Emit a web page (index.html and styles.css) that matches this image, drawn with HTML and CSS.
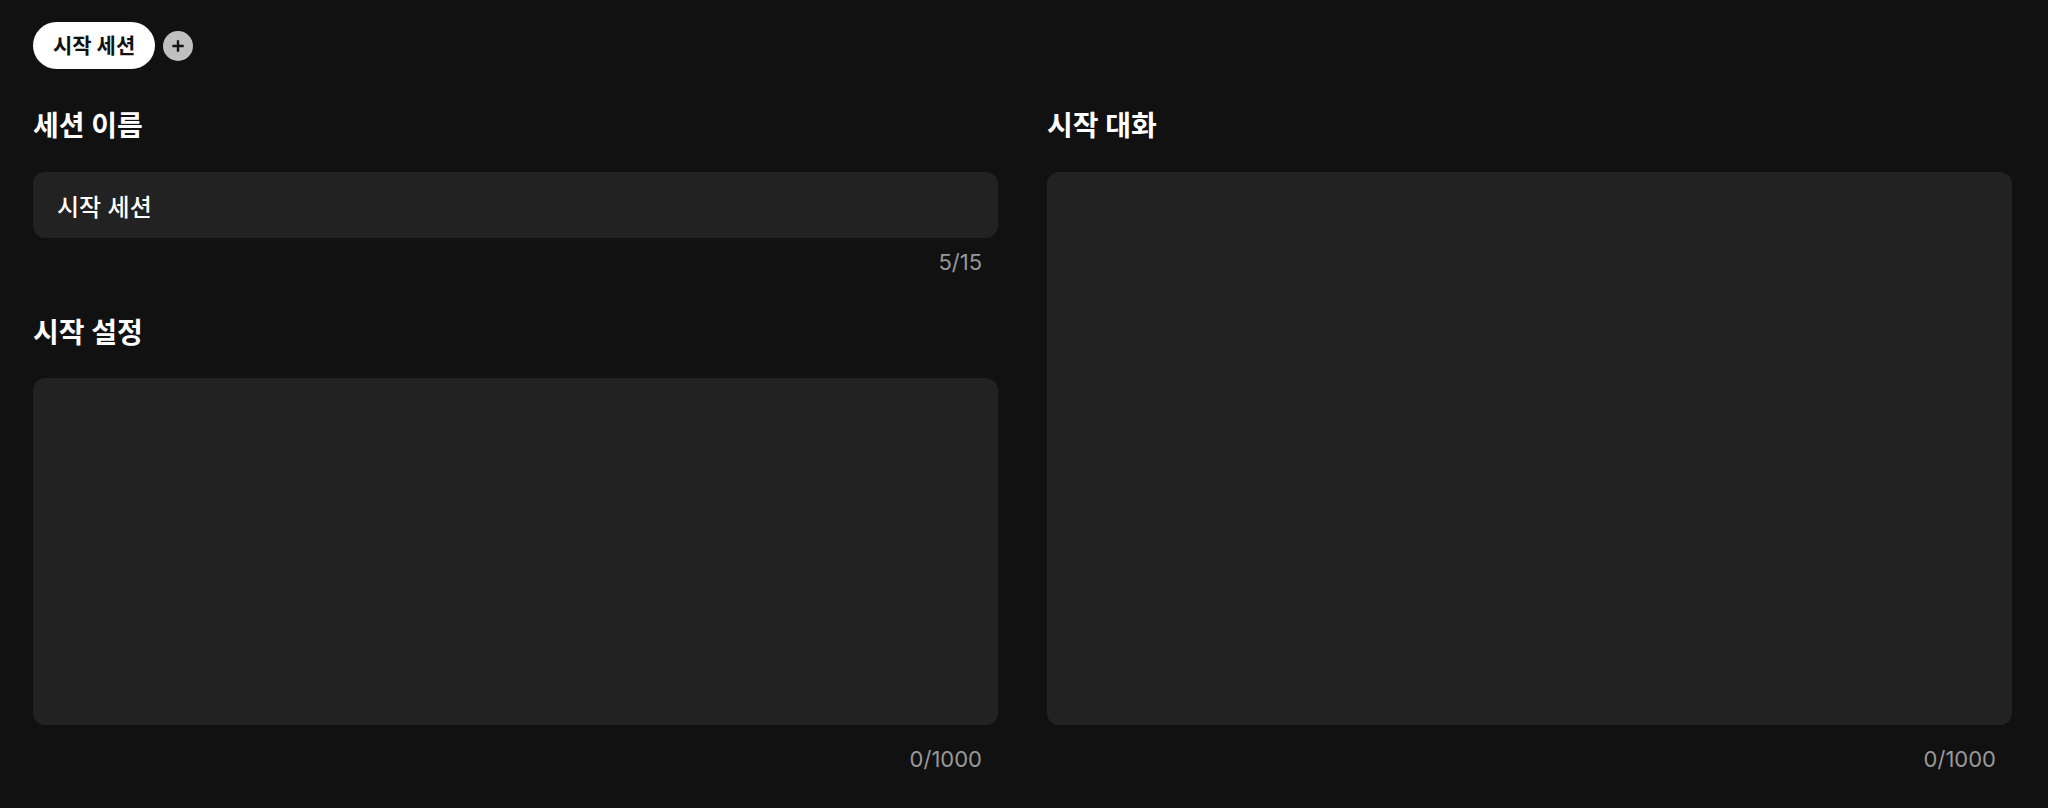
FILE: index.html
```html
<!DOCTYPE html>
<html lang="ko">
<head>
<meta charset="utf-8">
<title>세션 편집</title>
<link rel="stylesheet" href="styles.css">
</head>
<body>
<div class="page">
  <div class="tabs">
    <button class="tab tab-active">시작 세션</button>
    <button class="add-btn" aria-label="세션 추가">
      <svg width="12" height="12" viewBox="0 0 12 12"><path d="M6 0.3V11.7M0.3 6H11.7" stroke="#141414" stroke-width="2.4" stroke-linecap="butt"/></svg>
    </button>
  </div>
  <div class="columns">
    <div class="col">
      <h2 class="label">세션 이름</h2>
      <input class="field field-input" type="text" value="시작 세션">
      <div class="counter counter-tight">5/15</div>
      <h2 class="label label-second">시작 설정</h2>
      <textarea class="field field-area field-area-short"></textarea>
      <div class="counter">0/1000</div>
    </div>
    <div class="col">
      <h2 class="label">시작 대화</h2>
      <textarea class="field field-area field-area-tall"></textarea>
      <div class="counter">0/1000</div>
    </div>
  </div>
</div>
</body>
</html>
```

FILE: styles.css
```css
html, body {
  margin: 0;
  padding: 0;
  background: #111111;
}

body {
  font-family: "Inter", "Noto Sans CJK KR", sans-serif;
  color: #ffffff;
}

.page {
  padding: 22px 36px 0 33px;
}

.tabs {
  display: flex;
  align-items: center;
  gap: 8px;
  height: 47px;
}

.tab {
  height: 47px;
  padding: 0 20px;
  border: none;
  border-radius: 999px;
  background: #ffffff;
  color: #111111;
  font-family: "Inter", "Noto Sans CJK KR", sans-serif;
  font-size: 21px;
  font-weight: 700;
  line-height: 47px;
  cursor: pointer;
}

.add-btn {
  width: 30px;
  height: 30px;
  padding: 0;
  border: none;
  border-radius: 50%;
  background: #c0c0c0;
  display: flex;
  align-items: center;
  justify-content: center;
  cursor: pointer;
}

.columns {
  display: grid;
  grid-template-columns: 1fr 1fr;
  column-gap: 49px;
  margin-top: 39px;
}

.col {
  display: flex;
  flex-direction: column;
}

.label {
  margin: 0;
  font-size: 28px;
  font-weight: 700;
  line-height: 36px;
  color: #ffffff;
}

.label-second {
  margin-top: 40px;
}

.field {
  display: block;
  box-sizing: border-box;
  width: 100%;
  border: none;
  outline: none;
  border-radius: 12px;
  background: #222222;
  color: #ffffff;
  font-family: "Inter", "Noto Sans CJK KR", sans-serif;
  margin-top: 28px;
}

.field-input {
  height: 66px;
  padding: 0 24px;
  font-size: 24px;
  font-weight: 500;
}

.field-area {
  resize: none;
  padding: 20px 24px;
  font-size: 20px;
}

.label-second + .field-area {
  margin-top: 27px;
}

.field-area-short {
  height: 347px;
}

.field-area-tall {
  height: 553px;
}

.counter {
  margin-top: 21px;
  padding-right: 16px;
  text-align: right;
  font-size: 22px;
  line-height: 26px;
  color: #999999;
}

.counter-tight {
  margin-top: 11px;
}
```
